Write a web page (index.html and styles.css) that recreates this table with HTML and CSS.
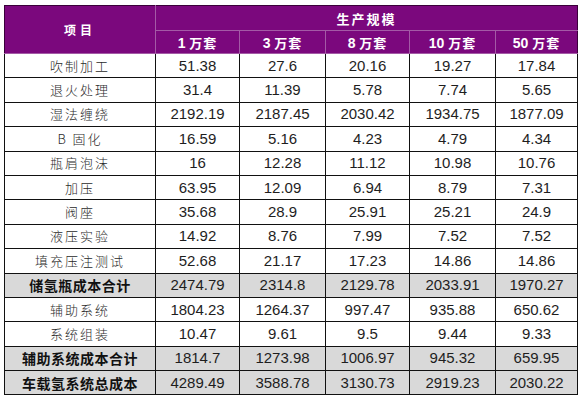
FILE: index.html
```html
<!DOCTYPE html>
<html lang="zh">
<head>
<meta charset="utf-8">
<link rel="stylesheet" href="styles.css">
</head>
<body>
<table class="cost">
  <colgroup>
    <col class="c0"><col class="c1"><col class="c2"><col class="c3"><col class="c4"><col class="c5">
  </colgroup>
  <thead>
    <tr class="h1">
      <th rowspan="2" class="item">项目</th>
      <th colspan="5" class="group">生产规模</th>
    </tr>
    <tr class="h2">
      <th><span class="n">1</span> 万套</th>
      <th><span class="n">3</span> 万套</th>
      <th><span class="n">8</span> 万套</th>
      <th><span class="n">10</span> 万套</th>
      <th><span class="n">50</span> 万套</th>
    </tr>
  </thead>
  <tbody>
    <tr><td class="lbl">吹制加工</td><td>51.38</td><td>27.6</td><td>20.16</td><td>19.27</td><td>17.84</td></tr>
    <tr><td class="lbl">退火处理</td><td>31.4</td><td>11.39</td><td>5.78</td><td>7.74</td><td>5.65</td></tr>
    <tr><td class="lbl">湿法缠绕</td><td>2192.19</td><td>2187.45</td><td>2030.42</td><td>1934.75</td><td>1877.09</td></tr>
    <tr><td class="lbl">B 固化</td><td>16.59</td><td>5.16</td><td>4.23</td><td>4.79</td><td>4.34</td></tr>
    <tr><td class="lbl">瓶肩泡沫</td><td>16</td><td>12.28</td><td>11.12</td><td>10.98</td><td>10.76</td></tr>
    <tr><td class="lbl">加压</td><td>63.95</td><td>12.09</td><td>6.94</td><td>8.79</td><td>7.31</td></tr>
    <tr><td class="lbl">阀座</td><td>35.68</td><td>28.9</td><td>25.91</td><td>25.21</td><td>24.9</td></tr>
    <tr><td class="lbl">液压实验</td><td>14.92</td><td>8.76</td><td>7.99</td><td>7.52</td><td>7.52</td></tr>
    <tr><td class="lbl">填充压注测试</td><td>52.68</td><td>21.17</td><td>17.23</td><td>14.86</td><td>14.86</td></tr>
    <tr class="sum"><td class="lbl">储氢瓶成本合计</td><td>2474.79</td><td>2314.8</td><td>2129.78</td><td>2033.91</td><td>1970.27</td></tr>
    <tr><td class="lbl">辅助系统</td><td>1804.23</td><td>1264.37</td><td>997.47</td><td>935.88</td><td>650.62</td></tr>
    <tr><td class="lbl">系统组装</td><td>10.47</td><td>9.61</td><td>9.5</td><td>9.44</td><td>9.33</td></tr>
    <tr class="sum"><td class="lbl">辅助系统成本合计</td><td>1814.7</td><td>1273.98</td><td>1006.97</td><td>945.32</td><td>659.95</td></tr>
    <tr class="sum"><td class="lbl">车载氢系统总成本</td><td>4289.49</td><td>3588.78</td><td>3130.73</td><td>2919.23</td><td>2030.22</td></tr>
  </tbody>
</table>
</body>
</html>
```

FILE: styles.css
```css
html, body {
  margin: 0;
  padding: 0;
  background: #ffffff;
}

body {
  padding: 5px 0 0 4px;
}

.cost {
  border-collapse: collapse;
  table-layout: fixed;
  width: 574px;
  font-family: "Liberation Sans", Arial, "Noto Sans CJK SC", sans-serif;
  color: #1e1e1e;
}

.c0 { width: 151px; }
.c1 { width: 84px; }
.c2 { width: 86px; }
.c3 { width: 84px; }
.c4 { width: 86px; }
.c5 { width: 82px; }

.cost th {
  background: #7b087d;
  color: #ffffff;
  font-weight: bold;
  font-family: "Noto Sans CJK SC", sans-serif;
  font-size: 13px;
  padding: 0;
  border: 1px solid #a45aa6;
  text-align: center;
}

.cost thead tr:first-child th { border-top-color: #3a003a; }
.cost thead th.item { border-left-color: #3a003a; letter-spacing: 4px; font-size: 12px; }
.cost thead th:last-child { border-right-color: #3a003a; }
.cost .h2 th { letter-spacing: 1px; }
.cost .group { letter-spacing: 2px; }

.h1 { height: 25px; }
.h2 { height: 23px; }

.cost .n {
  font-family: "Liberation Sans", Arial, sans-serif;
  font-size: 14px;
  font-weight: bold;
  letter-spacing: 0;
}

.cost td {
  border: 1px solid #111111;
  text-align: center;
  padding: 0;
  font-size: 15px;
  height: 23.4px;
  line-height: 18px;
}

.cost td.lbl {
  font-family: "Noto Sans CJK SC", sans-serif;
  font-size: 13px;
  font-weight: 300;
  letter-spacing: 2px;
  color: #2a2a2a;
}

.cost tr.sum td {
  background: #d9d9d9;
}

.cost tr.sum td.lbl {
  font-weight: bold;
  font-size: 14px;
  letter-spacing: 0.5px;
  color: #111111;
}
```
